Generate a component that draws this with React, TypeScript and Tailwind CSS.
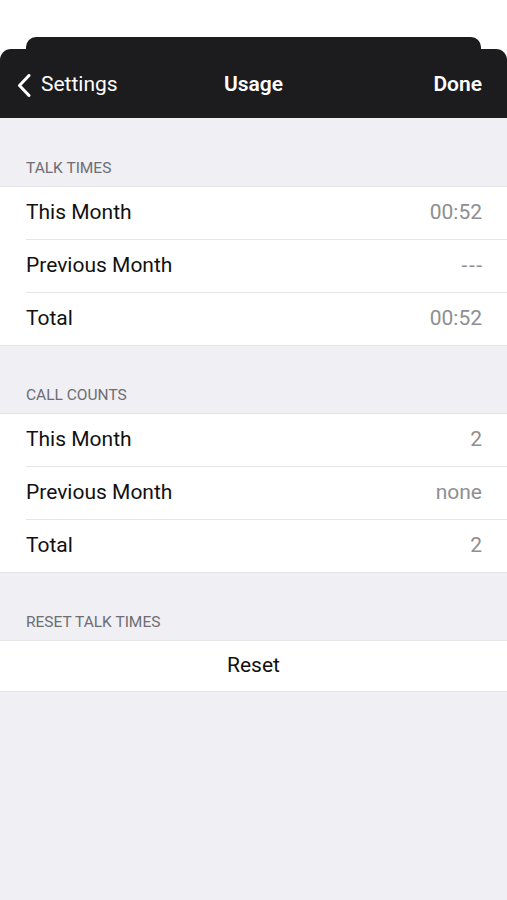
import React from 'react';

type Row = { label: string; value: string };

const talkTimes: Row[] = [
  { label: 'This Month', value: '00:52' },
  { label: 'Previous Month', value: '---' },
  { label: 'Total', value: '00:52' },
];

const callCounts: Row[] = [
  { label: 'This Month', value: '2' },
  { label: 'Previous Month', value: 'none' },
  { label: 'Total', value: '2' },
];

function SectionHeader({ title, first }: { title: string; first?: boolean }) {
  return (
    <div
      className={
        'flex items-end pb-[10px] px-[26px] text-[15.5px] leading-[15px] text-[#6d6d72] ' +
        (first ? 'h-[68px]' : 'h-[67px]')
      }
    >
      {title}
    </div>
  );
}

function Group({ rows }: { rows: Row[] }) {
  return (
    <div className="bg-white border-y border-[#e3e3e8]">
      {rows.map((r, i) => (
        <div key={i} className="pl-[26px]">
          <div
            className={
              'flex items-center justify-between pr-[25px] ' +
              (i < rows.length - 1 ? 'h-[53px] border-b border-[#e6e6ea]' : 'h-[52px]')
            }
          >
            <span className="text-[21px] text-[#111]">{r.label}</span>
            <span className={'text-[21px] text-[#8e8e93] ' + (r.value === '---' ? 'tracking-[1.5px] mr-[-1.5px]' : '')}>
              {r.value}
            </span>
          </div>
        </div>
      ))}
    </div>
  );
}

export default function App() {
  return (
    <div className="min-h-[900px] bg-[#efeff4] flex flex-col" style={{ fontFamily: 'Roboto, "Noto Sans", sans-serif' }}>
      <div className="bg-white pt-[37px]">
        <div className="mx-[26px] h-[12px] bg-[#1c1c1e] rounded-t-[10px]" />
        <div className="h-[69px] bg-[#1c1c1e] rounded-t-[11px] grid grid-cols-[1fr_auto_1fr] items-center px-[17px] pt-[3px] text-white">
          <button className="flex items-center gap-[10px] text-[21px] justify-self-start">
            <svg width="14" height="23" viewBox="0 0 14 23" fill="none">
              <path d="M12 1.5 L2.5 11.5 L12 21.5" stroke="white" strokeWidth="3" strokeLinecap="round" strokeLinejoin="round" />
            </svg>
            Settings
          </button>
          <div className="text-[21px] font-semibold">Usage</div>
          <button className="text-[21px] font-semibold pr-[8px] justify-self-end">Done</button>
        </div>
      </div>

      <SectionHeader title="TALK TIMES" first />
      <Group rows={talkTimes} />
      <SectionHeader title="CALL COUNTS" />
      <Group rows={callCounts} />
      <SectionHeader title="RESET TALK TIMES" />
      <div className="bg-white border-y border-[#e3e3e8] h-[52px] flex items-center justify-center text-[21px] text-[#111]">
        Reset
      </div>
    </div>
  );
}
